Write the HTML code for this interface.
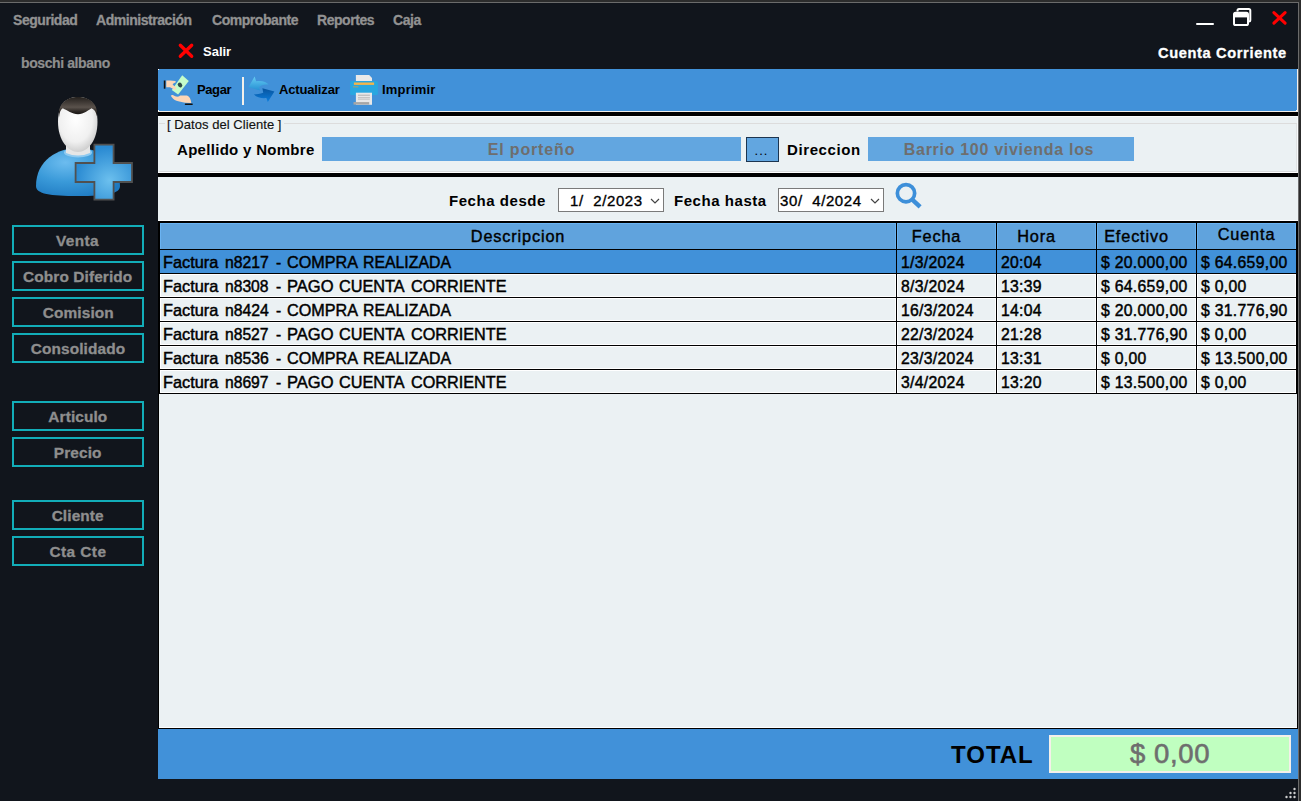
<!DOCTYPE html>
<html><head><meta charset="utf-8">
<style>
*{margin:0;padding:0;box-sizing:border-box}
html,body{width:1301px;height:801px;overflow:hidden;background:#2c2c2c}
body{position:relative;font-family:"Liberation Sans",sans-serif}
.a{position:absolute}
#win{position:absolute;left:0;top:2px;width:1299px;height:799px;background:#11151c;border-top:1px solid #6b6b6b;border-right:1px solid #6b6b6b}
.menu{position:absolute;top:12px;font-size:14px;letter-spacing:-0.45px;font-weight:700;color:#929292;white-space:nowrap;-webkit-text-stroke:0.3px #929292}
.sb{position:absolute;left:12px;width:132px;height:30px;border:2px solid #12adb8;color:#8e8e8e;font-size:14px;font-weight:700;text-align:center;line-height:28px;white-space:nowrap}
.sb span{display:inline-block;transform:scaleX(1.1);letter-spacing:0.1px;-webkit-text-stroke:0.3px #8e8e8e}
.tb{position:absolute;top:82px;font-size:13px;font-weight:700;color:#000;white-space:nowrap}
.g{font-size:15px;letter-spacing:0.6px;white-space:nowrap;position:absolute;color:#000}
.gc{font-size:15.75px;letter-spacing:0.3px;-webkit-text-stroke-width:0.45px;white-space:nowrap;position:absolute;color:#000;transform-origin:0 0}
.hd{font-size:16.3px;letter-spacing:0.85px;-webkit-text-stroke-width:0.4px;white-space:nowrap;position:absolute;color:#000}
</style></head><body>
<div id="win"></div>

<!-- menu -->
<div class="menu" style="left:13px">Seguridad</div>
<div class="menu" style="left:96px">Administración</div>
<div class="menu" style="left:212px">Comprobante</div>
<div class="menu" style="left:317px">Reportes</div>
<div class="menu" style="left:393px">Caja</div>


<!-- window controls -->
<div class="a" style="left:1196px;top:23px;width:18px;height:2.3px;background:#fff;border-radius:1px"></div>
<svg class="a" style="left:1230px;top:5px" width="26" height="26" viewBox="0 0 26 26">
  <path d="M7.5 6.5 V5.5 Q7.5 4 9 4 H18.8 Q20.3 4 20.3 5.5 V15 Q20.3 16.5 18.8 16.5 H18" fill="none" stroke="#fff" stroke-width="2"/>
  <rect x="4" y="7.8" width="14" height="12.3" rx="1.6" fill="none" stroke="#fff" stroke-width="2"/>
  <rect x="4" y="7.8" width="14" height="4.6" fill="#fff"/>
</svg>
<svg class="a" style="left:1270px;top:9px" width="19" height="18" viewBox="0 0 19 18">
  <path d="M3.9 3.6 L15.1 14.2 M15.1 3.6 L3.9 14.2" stroke="#ff0000" stroke-width="3.1" stroke-linecap="round"/>
</svg>

<!-- user -->
<div class="a" style="left:21px;top:55px;font-size:14px;font-weight:700;color:#8e8e8e;white-space:nowrap;letter-spacing:-0.4px;-webkit-text-stroke:0.2px #8e8e8e">boschi albano</div>

<!-- salir -->
<svg class="a" style="left:177px;top:42px" width="18" height="18" viewBox="0 0 18 18">
  <path d="M3.3 3.2 L14.7 14.3 M14.7 3.2 L3.3 14.3" stroke="#ff0000" stroke-width="3.3" stroke-linecap="round"/>
</svg>
<div class="a" style="left:203px;top:44px;font-size:13px;font-weight:700;color:#fff;white-space:nowrap">Salir</div>
<div class="a" style="left:1158px;top:45px;font-size:14px;font-weight:700;color:#fff;white-space:nowrap;letter-spacing:0.6px;transform:scaleX(1.045);transform-origin:0 0;-webkit-text-stroke:0.3px #fff">Cuenta Corriente</div>

<!-- sidebar buttons -->
<div class="sb" style="top:225px"><span style="letter-spacing:0.35px">Venta</span></div>
<div class="sb" style="top:261px"><span>Cobro Diferido</span></div>
<div class="sb" style="top:297px"><span>Comision</span></div>
<div class="sb" style="top:333px"><span>Consolidado</span></div>
<div class="sb" style="top:401px"><span>Articulo</span></div>
<div class="sb" style="top:437px"><span>Precio</span></div>
<div class="sb" style="top:500px"><span>Cliente</span></div>
<div class="sb" style="top:536px"><span style="letter-spacing:0.4px">Cta Cte</span></div>

<!-- toolbar -->
<div class="a" style="left:158px;top:69px;width:1140px;height:43px;background:#4191d9;border-bottom:1px solid #f4f0ea"></div>
<div class="a" style="left:158px;top:69px;width:1px;height:1px;background:#fff"></div>
<div class="a" style="left:1297px;top:69px;width:1px;height:1px;background:#fff"></div>
<div class="a" style="left:158px;top:110px;width:1px;height:1px;background:#fff"></div>
<div class="a" style="left:1296px;top:110px;width:2px;height:1px;background:#fff"></div>
<div class="a" style="left:1297px;top:69px;width:1px;height:43px;background:#f4f0ea"></div>
<div class="a" style="left:242px;top:77px;width:2px;height:28px;background:#f4f0ea"></div>
<div class="tb" style="left:197px;letter-spacing:-0.4px">Pagar</div>
<div class="tb" style="left:279px;letter-spacing:-0.15px">Actualizar</div>
<div class="tb" style="left:382px;letter-spacing:0.2px">Imprimir</div>

<!-- black bands & panels -->
<div class="a" style="left:158px;top:112px;width:1140px;height:4px;background:#000"></div>
<div class="a" style="left:158px;top:116px;width:1140px;height:57px;background:#ebf1f3;border-top:1px solid #fbfdfe;border-right:1px solid #f8fbfc;border-bottom:1px solid #fff"></div>
<div class="a" style="left:159px;top:171px;width:1138px;height:1px;background:#d9dbdc"></div>
<div class="a" style="left:1296px;top:123px;width:1px;height:49px;background:#dfe2e3"></div>
<div class="a" style="left:158px;top:173px;width:1140px;height:4px;background:#000"></div>
<div class="a" style="left:158px;top:177px;width:1140px;height:44px;background:#ebf1f3;border-bottom:1px solid #fff"></div>

<!-- group box -->
<div class="a" style="left:159px;top:123px;width:1138px;height:1px;background:#dcdcdc"></div>
<div class="a" style="left:165px;top:117px;padding:0 2px;background:#ebf1f3;font-size:13px;color:#111;white-space:nowrap;-webkit-text-stroke:0.15px #111;letter-spacing:0.05px">[ Datos del Cliente ]</div>
<div class="g" style="left:177px;top:141px;font-weight:700;letter-spacing:0.3px">Apellido y Nombre</div>
<div class="a" style="left:322px;top:137px;width:419px;height:24px;background:#62a6e0"></div>
<div class="g" style="left:322px;width:419px;top:141px;font-weight:700;color:#6e6e6e;text-align:center;font-size:16px;letter-spacing:0.85px;padding-left:0px">El porteño</div>
<div class="a" style="left:746px;top:137px;width:33px;height:25px;background:#62a6e0;border:1px solid #1c3550"></div>
<div class="a" style="left:745px;top:143px;width:33px;text-align:center;font-size:13px;color:#000;letter-spacing:1px">...</div>
<div class="g" style="left:787px;top:141px;font-weight:700;letter-spacing:0.6px">Direccion</div>
<div class="a" style="left:868px;top:137px;width:266px;height:24px;background:#62a6e0"></div>
<div class="g" style="left:866px;width:266px;top:141px;font-weight:700;color:#6e6e6e;text-align:center;font-size:16px;letter-spacing:0.7px">Barrio 100 vivienda los</div>

<!-- date filter -->
<div class="g" style="left:449px;top:192px;font-weight:700;letter-spacing:0.55px">Fecha desde</div>
<div class="a" style="left:558px;top:188px;width:106px;height:24px;background:#fff;border:1px solid #7a7a7a"></div>
<div class="g" style="left:570px;top:192px;letter-spacing:0.6px;-webkit-text-stroke-width:0.35px">1/&nbsp;&nbsp;2/2023</div>
<svg class="a" style="left:649px;top:197px" width="12" height="8" viewBox="0 0 12 8"><path d="M2 2 L6 6 L10 2" fill="none" stroke="#444" stroke-width="1.2"/></svg>
<div class="g" style="left:674px;top:192px;font-weight:700;letter-spacing:0.55px">Fecha hasta</div>
<div class="a" style="left:778px;top:188px;width:106px;height:24px;background:#fff;border:1px solid #7a7a7a"></div>
<div class="g" style="left:780px;top:192px;letter-spacing:0.6px;-webkit-text-stroke-width:0.35px">30/&nbsp;&nbsp;4/2024</div>
<svg class="a" style="left:869px;top:197px" width="12" height="8" viewBox="0 0 12 8"><path d="M2 2 L6 6 L10 2" fill="none" stroke="#444" stroke-width="1.2"/></svg>
<svg class="a" style="left:894px;top:181px" width="30" height="30" viewBox="0 0 30 30">
  <circle cx="12" cy="12.2" r="8.65" fill="none" stroke="#3d8fd9" stroke-width="3.7"/>
  <path d="M18.3 18.6 L26.1 25.9" stroke="#3d8fd9" stroke-width="4.4" stroke-linecap="butt"/>
</svg>

<!-- grid -->
<div class="a" style="left:158px;top:221px;width:1140px;height:508px;background:#ebf1f3;border:1px solid #000;border-top-width:2px;border-left-width:1px"></div>
<div class="a" style="left:159px;top:727px;width:1138px;height:1px;background:#fff"></div>
<div id="grid">
<div class="a" style="left:160px;top:223px;width:736px;height:26px;background:#60a3dd;border:1px solid #6ab3f2;border-bottom:none"></div>
<div class="hd" style="left:160px;width:716px;top:227px;text-align:center">Descripcion</div>
<div class="a" style="left:897px;top:223px;width:99px;height:26px;background:#60a3dd;border:1px solid #6ab3f2;border-bottom:none"></div>
<div class="hd" style="left:897px;width:79px;top:227px;text-align:center">Fecha</div>
<div class="a" style="left:997px;top:223px;width:99px;height:26px;background:#60a3dd;border:1px solid #6ab3f2;border-bottom:none"></div>
<div class="hd" style="left:997px;width:79px;top:227px;text-align:center">Hora</div>
<div class="a" style="left:1097px;top:223px;width:99px;height:26px;background:#60a3dd;border:1px solid #6ab3f2;border-bottom:none"></div>
<div class="hd" style="left:1097px;width:79px;top:227px;text-align:center">Efectivo</div>
<div class="a" style="left:1197px;top:223px;width:99px;height:26px;background:#60a3dd;border:1px solid #6ab3f2;border-bottom:none"></div>
<div class="hd" style="left:1197px;width:99px;top:225px;text-align:center">Cuenta</div>
<div class="a" style="left:896px;top:223px;width:1px;height:171px;background:#000"></div>
<div class="a" style="left:996px;top:223px;width:1px;height:171px;background:#000"></div>
<div class="a" style="left:1096px;top:223px;width:1px;height:171px;background:#000"></div>
<div class="a" style="left:1196px;top:223px;width:1px;height:171px;background:#000"></div>
<div class="a" style="left:158px;top:221px;width:2px;height:173px;background:#000"></div>
<div class="a" style="left:1296px;top:221px;width:2px;height:173px;background:#000"></div>
<div class="a" style="left:158px;top:249px;width:1140px;height:1px;background:#000"></div>
<div class="a" style="left:160px;top:250px;width:736px;height:23px;background:#4191d9"></div>
<div class="gc" style="left:163.41px;top:254px;letter-spacing:0;transform:scaleX(1.036)">Factura</div>
<div class="gc" style="left:225.45px;top:254px;letter-spacing:0;transform:scaleX(1.002)">n8217</div>
<div class="gc" style="left:275.85px;top:254px;letter-spacing:0;transform:scaleX(0.980)">-</div>
<div class="gc" style="left:287.15px;top:254px;letter-spacing:0;transform:scaleX(1.026)">COMPRA</div>
<div class="gc" style="left:362.95px;top:254px;letter-spacing:0;transform:scaleX(1.005)">REALIZADA</div>
<div class="a" style="left:897px;top:250px;width:99px;height:23px;background:#4191d9"></div>
<div class="gc" style="left:901px;top:254px">1/3/2024</div>
<div class="a" style="left:997px;top:250px;width:99px;height:23px;background:#4191d9"></div>
<div class="gc" style="left:1001px;top:254px">20:04</div>
<div class="a" style="left:1097px;top:250px;width:99px;height:23px;background:#4191d9"></div>
<div class="gc" style="left:1101px;top:254px">$ 20.000,00</div>
<div class="a" style="left:1197px;top:250px;width:99px;height:23px;background:#4191d9"></div>
<div class="gc" style="left:1201px;top:254px">$ 64.659,00</div>
<div class="a" style="left:158px;top:273px;width:1140px;height:1px;background:#000"></div>
<div class="a" style="left:160px;top:274px;width:736px;height:23px;background:#ebf1f3;border:1px solid #fff"></div>
<div class="gc" style="left:163.41px;top:278px;letter-spacing:0;transform:scaleX(1.036)">Factura</div>
<div class="gc" style="left:225.45px;top:278px;letter-spacing:0;transform:scaleX(0.993)">n8308</div>
<div class="gc" style="left:275.85px;top:278px;letter-spacing:0;transform:scaleX(0.980)">-</div>
<div class="gc" style="left:286.60px;top:278px;letter-spacing:0;transform:scaleX(1.049)">PAGO</div>
<div class="gc" style="left:339.25px;top:278px;letter-spacing:0;transform:scaleX(1.030)">CUENTA</div>
<div class="gc" style="left:411.15px;top:278px;letter-spacing:0;transform:scaleX(1.029)">CORRIENTE</div>
<div class="a" style="left:897px;top:274px;width:99px;height:23px;background:#ebf1f3;border:1px solid #fff"></div>
<div class="gc" style="left:901px;top:278px">8/3/2024</div>
<div class="a" style="left:997px;top:274px;width:99px;height:23px;background:#ebf1f3;border:1px solid #fff"></div>
<div class="gc" style="left:1001px;top:278px">13:39</div>
<div class="a" style="left:1097px;top:274px;width:99px;height:23px;background:#ebf1f3;border:1px solid #fff"></div>
<div class="gc" style="left:1101px;top:278px">$ 64.659,00</div>
<div class="a" style="left:1197px;top:274px;width:99px;height:23px;background:#ebf1f3;border:1px solid #fff"></div>
<div class="gc" style="left:1201px;top:278px">$ 0,00</div>
<div class="a" style="left:158px;top:297px;width:1140px;height:1px;background:#000"></div>
<div class="a" style="left:160px;top:298px;width:736px;height:23px;background:#ebf1f3;border:1px solid #fff"></div>
<div class="gc" style="left:163.41px;top:302px;letter-spacing:0;transform:scaleX(1.036)">Factura</div>
<div class="gc" style="left:225.45px;top:302px;letter-spacing:0;transform:scaleX(1.002)">n8424</div>
<div class="gc" style="left:275.85px;top:302px;letter-spacing:0;transform:scaleX(0.980)">-</div>
<div class="gc" style="left:287.15px;top:302px;letter-spacing:0;transform:scaleX(1.026)">COMPRA</div>
<div class="gc" style="left:362.95px;top:302px;letter-spacing:0;transform:scaleX(1.005)">REALIZADA</div>
<div class="a" style="left:897px;top:298px;width:99px;height:23px;background:#ebf1f3;border:1px solid #fff"></div>
<div class="gc" style="left:901px;top:302px">16/3/2024</div>
<div class="a" style="left:997px;top:298px;width:99px;height:23px;background:#ebf1f3;border:1px solid #fff"></div>
<div class="gc" style="left:1001px;top:302px">14:04</div>
<div class="a" style="left:1097px;top:298px;width:99px;height:23px;background:#ebf1f3;border:1px solid #fff"></div>
<div class="gc" style="left:1101px;top:302px">$ 20.000,00</div>
<div class="a" style="left:1197px;top:298px;width:99px;height:23px;background:#ebf1f3;border:1px solid #fff"></div>
<div class="gc" style="left:1201px;top:302px">$ 31.776,90</div>
<div class="a" style="left:158px;top:321px;width:1140px;height:1px;background:#000"></div>
<div class="a" style="left:160px;top:322px;width:736px;height:23px;background:#ebf1f3;border:1px solid #fff"></div>
<div class="gc" style="left:163.41px;top:326px;letter-spacing:0;transform:scaleX(1.036)">Factura</div>
<div class="gc" style="left:225.45px;top:326px;letter-spacing:0;transform:scaleX(0.993)">n8527</div>
<div class="gc" style="left:275.85px;top:326px;letter-spacing:0;transform:scaleX(0.980)">-</div>
<div class="gc" style="left:286.60px;top:326px;letter-spacing:0;transform:scaleX(1.049)">PAGO</div>
<div class="gc" style="left:339.25px;top:326px;letter-spacing:0;transform:scaleX(1.030)">CUENTA</div>
<div class="gc" style="left:411.15px;top:326px;letter-spacing:0;transform:scaleX(1.029)">CORRIENTE</div>
<div class="a" style="left:897px;top:322px;width:99px;height:23px;background:#ebf1f3;border:1px solid #fff"></div>
<div class="gc" style="left:901px;top:326px">22/3/2024</div>
<div class="a" style="left:997px;top:322px;width:99px;height:23px;background:#ebf1f3;border:1px solid #fff"></div>
<div class="gc" style="left:1001px;top:326px">21:28</div>
<div class="a" style="left:1097px;top:322px;width:99px;height:23px;background:#ebf1f3;border:1px solid #fff"></div>
<div class="gc" style="left:1101px;top:326px">$ 31.776,90</div>
<div class="a" style="left:1197px;top:322px;width:99px;height:23px;background:#ebf1f3;border:1px solid #fff"></div>
<div class="gc" style="left:1201px;top:326px">$ 0,00</div>
<div class="a" style="left:158px;top:345px;width:1140px;height:1px;background:#000"></div>
<div class="a" style="left:160px;top:346px;width:736px;height:23px;background:#ebf1f3;border:1px solid #fff"></div>
<div class="gc" style="left:163.41px;top:350px;letter-spacing:0;transform:scaleX(1.036)">Factura</div>
<div class="gc" style="left:225.45px;top:350px;letter-spacing:0;transform:scaleX(1.002)">n8536</div>
<div class="gc" style="left:275.85px;top:350px;letter-spacing:0;transform:scaleX(0.980)">-</div>
<div class="gc" style="left:287.15px;top:350px;letter-spacing:0;transform:scaleX(1.026)">COMPRA</div>
<div class="gc" style="left:362.95px;top:350px;letter-spacing:0;transform:scaleX(1.005)">REALIZADA</div>
<div class="a" style="left:897px;top:346px;width:99px;height:23px;background:#ebf1f3;border:1px solid #fff"></div>
<div class="gc" style="left:901px;top:350px">23/3/2024</div>
<div class="a" style="left:997px;top:346px;width:99px;height:23px;background:#ebf1f3;border:1px solid #fff"></div>
<div class="gc" style="left:1001px;top:350px">13:31</div>
<div class="a" style="left:1097px;top:346px;width:99px;height:23px;background:#ebf1f3;border:1px solid #fff"></div>
<div class="gc" style="left:1101px;top:350px">$ 0,00</div>
<div class="a" style="left:1197px;top:346px;width:99px;height:23px;background:#ebf1f3;border:1px solid #fff"></div>
<div class="gc" style="left:1201px;top:350px">$ 13.500,00</div>
<div class="a" style="left:158px;top:369px;width:1140px;height:1px;background:#000"></div>
<div class="a" style="left:160px;top:370px;width:736px;height:23px;background:#ebf1f3;border:1px solid #fff"></div>
<div class="gc" style="left:163.41px;top:374px;letter-spacing:0;transform:scaleX(1.036)">Factura</div>
<div class="gc" style="left:225.45px;top:374px;letter-spacing:0;transform:scaleX(0.993)">n8697</div>
<div class="gc" style="left:275.85px;top:374px;letter-spacing:0;transform:scaleX(0.980)">-</div>
<div class="gc" style="left:286.60px;top:374px;letter-spacing:0;transform:scaleX(1.049)">PAGO</div>
<div class="gc" style="left:339.25px;top:374px;letter-spacing:0;transform:scaleX(1.030)">CUENTA</div>
<div class="gc" style="left:411.15px;top:374px;letter-spacing:0;transform:scaleX(1.029)">CORRIENTE</div>
<div class="a" style="left:897px;top:370px;width:99px;height:23px;background:#ebf1f3;border:1px solid #fff"></div>
<div class="gc" style="left:901px;top:374px">3/4/2024</div>
<div class="a" style="left:997px;top:370px;width:99px;height:23px;background:#ebf1f3;border:1px solid #fff"></div>
<div class="gc" style="left:1001px;top:374px">13:20</div>
<div class="a" style="left:1097px;top:370px;width:99px;height:23px;background:#ebf1f3;border:1px solid #fff"></div>
<div class="gc" style="left:1101px;top:374px">$ 13.500,00</div>
<div class="a" style="left:1197px;top:370px;width:99px;height:23px;background:#ebf1f3;border:1px solid #fff"></div>
<div class="gc" style="left:1201px;top:374px">$ 0,00</div>
<div class="a" style="left:158px;top:393px;width:1140px;height:1px;background:#000"></div>
</div>

<!-- total bar -->
<div class="a" style="left:158px;top:729px;width:1140px;height:50px;background:#4191d9"></div>
<div class="a" style="left:951px;top:741px;font-size:24px;font-weight:700;color:#000;letter-spacing:1px;white-space:nowrap">TOTAL</div>
<div class="a" style="left:1049px;top:735px;width:242px;height:38px;background:#c0ffc0;border:2px solid #f4f0ea"></div>
<div class="a" style="left:1049px;top:738px;width:242px;text-align:center;font-size:27.5px;color:#6e6e6e;letter-spacing:0.6px;-webkit-text-stroke:0.6px #6e6e6e;white-space:nowrap">$ 0,00</div>


<!-- avatar -->
<svg class="a" style="left:30px;top:90px" width="110" height="115" viewBox="30 90 110 115">
  <defs>
    <radialGradient id="bodyG" cx="0.35" cy="0.3" r="0.8">
      <stop offset="0" stop-color="#6cbcef"/>
      <stop offset="0.5" stop-color="#3a9ad9"/>
      <stop offset="1" stop-color="#1d78c0"/>
    </radialGradient>
    <radialGradient id="faceG" cx="0.45" cy="0.4" r="0.7">
      <stop offset="0" stop-color="#ffffff"/>
      <stop offset="0.6" stop-color="#f0f0f0"/>
      <stop offset="1" stop-color="#bdbdbd"/>
    </radialGradient>
    <linearGradient id="hairG" x1="0" y1="0" x2="0" y2="1">
      <stop offset="0" stop-color="#24201d"/>
      <stop offset="0.5" stop-color="#5a524c"/>
      <stop offset="0.72" stop-color="#2a2522"/>
      <stop offset="1" stop-color="#050404"/>
    </linearGradient>
    <radialGradient id="plusG" cx="0.6" cy="0.65" r="0.6">
      <stop offset="0" stop-color="#6cc0ee"/>
      <stop offset="1" stop-color="#2a8ad2"/>
    </radialGradient>
  </defs>
  <path d="M36 186 C36 160 58 148 78 148 C100 148 120 162 120 186 C120 194 106 196 78 196 C50 196 36 194 36 186 Z" fill="url(#bodyG)"/>
  <ellipse cx="78" cy="152.5" rx="14" ry="5" fill="#8fcaf0"/>
  <path d="M66 138 L90 138 L90 153 Q78 158 66 153 Z" fill="#e6e6e6"/>
  <path d="M58 122 C58 104 66 97 78 97 C90 97 97.5 104 97.5 122 C97.5 140 88 152 78 152 C68 152 58 140 58 122 Z" fill="url(#faceG)"/>
  <path d="M59 117.5 C57.5 104 66 97 78 97 C90 97 98.5 104 97 116.5 C96 112 94.5 109.5 91.5 108.3 C88 110.5 84 114.2 78 114.2 C72 114.2 67.5 110.5 62.8 108.3 C60.5 109.5 59.5 112.5 59 117.5 Z" fill="url(#hairG)"/>
  <path d="M94.4 144.6 H113.6 V163 H132 V182 H113.6 V199.6 H94.4 V182 H75.6 V163 H94.4 Z" fill="url(#plusG)" stroke="#505050" stroke-width="1.8" stroke-linejoin="miter"/>
</svg>

<!-- pagar icon -->
<svg class="a" style="left:160px;top:72px" width="36" height="36" viewBox="160 72 36 36">
  <path d="M182.2 75.2 L188.8 81.1 L178.1 94.6 L171.8 90.1 Z" fill="#c4fcca"/>
  <ellipse cx="180" cy="85" rx="2.1" ry="2.5" transform="rotate(-40 180 85)" fill="#2d4a48"/>
  <path d="M166.3 80.6 C169 80.3 172.5 80.2 175.5 81 L175.8 82.3 C174.5 82.8 173.2 83.5 172.6 84.3 L173.6 85.6 C175 86.5 176.2 87.6 176.3 88.6 C176.2 89.6 175.5 89.9 174.8 89.7 L170 87.3 L166.3 87.2 Z" fill="#fcd6b6"/>
  <rect x="163.8" y="80.5" width="1.6" height="8.2" fill="#111"/>
  <path d="M170.8 95.8 C171.5 94.8 172.5 94.8 173.3 95.3 C174.8 96.3 176.5 97 178.6 96.6 C179.5 96.2 180 95.6 181 95.6 L187 95.6 C189.5 96.5 190.8 99 191.3 103 L185.2 102.7 C182 102 178.5 101.5 176.5 100.8 C174 100 172 97.8 170.8 95.8 Z" fill="#fcd6b6"/>
  <rect x="184.8" y="103.4" width="8" height="1.5" rx="0.6" fill="#111"/>
</svg>

<!-- actualizar icon -->
<svg class="a" style="left:244px;top:72px" width="36" height="36" viewBox="244 72 36 36">
  <defs>
    <linearGradient id="arU" x1="0" y1="0" x2="0" y2="1">
      <stop offset="0" stop-color="#66ccf2"/>
      <stop offset="1" stop-color="#2590d4"/>
    </linearGradient>
    <linearGradient id="arD" x1="0" y1="0" x2="0" y2="1">
      <stop offset="0" stop-color="#07549e"/>
      <stop offset="1" stop-color="#0b7ddc"/>
    </linearGradient>
  </defs>
  <path d="M254.6 76.6 L256.2 81.2 C262 80.4 266.8 82 268.6 84.6 C264 84 260.5 85.6 259.2 87.2 L260 90.4 L248.4 87.2 Z" fill="url(#arU)"/>
  <path d="M267.8 102 L274.4 91.6 L262.4 88.2 L263.2 92.8 C260 93.9 256.5 94.4 254 94.4 C256.8 97.4 262 98.6 266.4 98 Z" fill="url(#arD)"/>
</svg>

<!-- imprimir icon -->
<svg class="a" style="left:348px;top:72px" width="32" height="36" viewBox="348 72 32 36">
  <path d="M355.9 74.9 H369.2 L372 78.1 V84 H355.9 Z" fill="#e9e9e9"/>
  <rect x="350.1" y="80.9" width="27.8" height="14" rx="1.5" fill="#29a7e0"/>
  <rect x="353.9" y="82.5" width="20.2" height="2.4" fill="#f4b54b"/>
  <rect x="353" y="86.2" width="5.4" height="1.2" fill="#c9a050" opacity="0.7"/>
  <rect x="355.9" y="92.7" width="16.1" height="12.1" fill="#e8e8e8"/>
  <rect x="358" y="94.6" width="11.9" height="1.3" fill="#bdbdbd"/>
  <rect x="358" y="97" width="11.9" height="1.1" fill="#c4c4c4"/>
  <rect x="358" y="98.6" width="11.9" height="1.1" fill="#c4c4c4"/>
  <rect x="353.5" y="102.1" width="15.7" height="2.5" fill="#a6a6a6"/>
</svg>

<!-- grip -->
<svg class="a" style="left:1284px;top:787px" width="14" height="12" viewBox="0 0 14 12">
  <g fill="#cfcfcf"><circle cx="10.5" cy="2" r="1.2"/><circle cx="6.5" cy="6" r="1.2"/><circle cx="10.5" cy="6" r="1.2"/><circle cx="2.5" cy="10" r="1.2"/><circle cx="6.5" cy="10" r="1.2"/><circle cx="10.5" cy="10" r="1.2"/></g>
</svg>

</body></html>
